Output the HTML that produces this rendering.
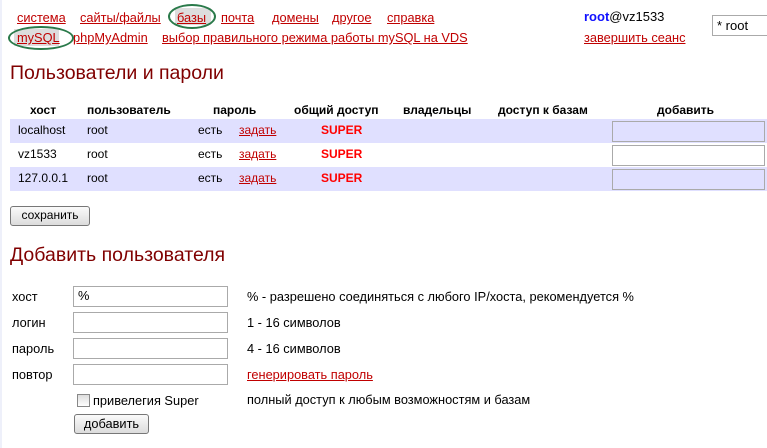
<!DOCTYPE html>
<html><head><meta charset="utf-8"><style>
body{margin:0;width:767px;height:448px;background:#fff;position:relative;overflow:hidden;font-family:"Liberation Sans",Arial,sans-serif;font-size:12px;color:#000}
.a{position:absolute;white-space:nowrap}
a,.l{color:#c00000;text-decoration:underline}
.h{color:#800000;font-size:19.5px}
.th{font-weight:bold;font-size:12px}
.row{position:absolute;left:10px;width:757px;height:24px;background:#e0e0ff}
.inp{position:absolute;border:1px solid #aaa;background:#fff;box-sizing:border-box}
.btn{position:absolute;border:1px solid #777;border-radius:3px;background:linear-gradient(#fafafa,#dcdcdc);font-size:12px;text-align:center;box-sizing:border-box;line-height:17px}
.sup{color:#f00;font-weight:bold}
.ell{position:absolute;border:2px solid #2a7a4a;border-radius:50%}
.f{font-size:12.8px}
.n{font-size:12.8px}
</style></head><body>
<div class="a" style="left:0;top:0;width:2px;height:448px;background:#eef0fa"></div>
<div class="a" style="left:175px;top:8px;width:36px;height:17px;background:#ddd"></div>
<div class="a" style="left:14px;top:29px;width:45px;height:17px;background:#ddd"></div>
<div class="a n" style="left:17px;top:10px"><a>система</a></div>
<div class="a n" style="left:80px;top:10px"><a>сайты/файлы</a></div>
<div class="a n" style="left:177px;top:10px"><a>базы</a></div>
<div class="a n" style="left:221px;top:10px"><a>почта</a></div>
<div class="a n" style="left:272px;top:10px"><a>домены</a></div>
<div class="a n" style="left:332px;top:10px"><a>другое</a></div>
<div class="a n" style="left:387px;top:10px"><a>справка</a></div>
<div class="a n" style="left:17px;top:30px"><a>mySQL</a></div>
<div class="a n" style="left:73px;top:30px"><a>phpMyAdmin</a></div>
<div class="a n" style="left:162px;top:30px"><a>выбор правильного режима работы mySQL на VDS</a></div>
<div class="ell" style="left:168px;top:4px;width:44px;height:21px"></div>
<div class="ell" style="left:8px;top:26px;width:62px;height:20px"></div>
<div class="a" style="left:584px;top:9px;font-size:13px"><b style="color:#1010ff">root</b>@vz1533</div>
<div class="a n" style="left:584px;top:30px"><a>завершить сеанс</a></div>
<div class="inp" style="left:712px;top:15px;width:60px;height:21px;font-size:13px;padding:2px 4px">* root</div>

<div class="a h" style="left:10px;top:62px">Пользователи и пароли</div>
<div class="a th" style="left:30px;top:103px">хост</div>
<div class="a th" style="left:87px;top:103px">пользователь</div>
<div class="a th" style="left:213px;top:103px">пароль</div>
<div class="a th" style="left:294px;top:103px">общий доступ</div>
<div class="a th" style="left:403px;top:103px">владельцы</div>
<div class="a th" style="left:498px;top:103px">доступ к базам</div>
<div class="a th" style="left:657px;top:103px">добавить</div>

<div class="row" style="top:119px"></div>
<div class="row" style="top:167px"></div>
<div class="a" style="left:18px;top:123px">localhost</div><div class="a" style="left:87px;top:123px">root</div><div class="a" style="left:198px;top:123px">есть</div><div class="a" style="left:239px;top:123px"><a>задать</a></div><div class="a sup" style="left:321px;top:123px">SUPER</div>
<div class="inp" style="left:612px;top:121px;width:153px;height:21px;background:#e0e0ff"></div>
<div class="a" style="left:18px;top:147px">vz1533</div><div class="a" style="left:87px;top:147px">root</div><div class="a" style="left:198px;top:147px">есть</div><div class="a" style="left:239px;top:147px"><a>задать</a></div><div class="a sup" style="left:321px;top:147px">SUPER</div>
<div class="inp" style="left:612px;top:145px;width:153px;height:21px"></div>
<div class="a" style="left:18px;top:171px">127.0.0.1</div><div class="a" style="left:87px;top:171px">root</div><div class="a" style="left:198px;top:171px">есть</div><div class="a" style="left:239px;top:171px"><a>задать</a></div><div class="a sup" style="left:321px;top:171px">SUPER</div>
<div class="inp" style="left:612px;top:169px;width:153px;height:21px;background:#e0e0ff"></div>
<div class="btn" style="left:10px;top:206px;width:80px;height:20px">сохранить</div>

<div class="a h" style="left:10px;top:244px">Добавить пользователя</div>
<div class="a f" style="left:12px;top:289px">хост</div>
<div class="a f" style="left:12px;top:315px">логин</div>
<div class="a f" style="left:12px;top:341px">пароль</div>
<div class="a f" style="left:12px;top:367px">повтор</div>
<div class="inp f" style="left:73px;top:286px;width:155px;height:21px;padding:1px 4px">%</div>
<div class="inp" style="left:73px;top:312px;width:155px;height:21px"></div>
<div class="inp" style="left:73px;top:338px;width:155px;height:21px"></div>
<div class="inp" style="left:73px;top:364px;width:155px;height:21px"></div>
<div class="a f" style="left:247px;top:289px">% - разрешено соединяться с любого IP/хоста, рекомендуется %</div>
<div class="a f" style="left:247px;top:315px">1 - 16 символов</div>
<div class="a f" style="left:247px;top:341px">4 - 16 символов</div>
<div class="a f" style="left:247px;top:367px"><a>генерировать пароль</a></div>
<div class="a" style="left:77px;top:394px;width:11px;height:11px;border:1px solid #888;background:linear-gradient(#ddd,#fff)"></div>
<div class="a f" style="left:93px;top:393px">привелегия Super</div>
<div class="a f" style="left:247px;top:392px">полный доступ к любым возможностям и базам</div>
<div class="btn f" style="left:74px;top:414px;width:75px;height:20px">добавить</div>
</body></html>
